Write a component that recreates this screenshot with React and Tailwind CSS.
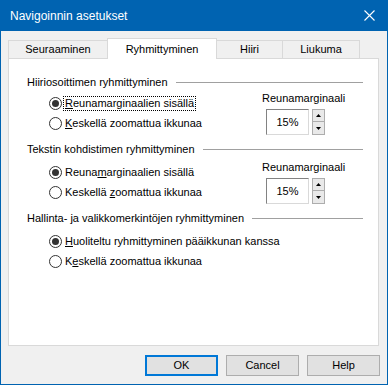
// App.jsx
// Windows-style "Navigoinnin asetukset" dialog, Ryhmittyminen tab selected

const FONT = { fontFamily: '"Liberation Sans", Arial, sans-serif' }

// ── Small pieces ──────────────

function Radio({ checked, focused, children }) {
  return (
    <div className="flex items-center h-[20px]">
      <span className="w-[13px] h-[13px] rounded-full border border-[#333] bg-white flex items-center justify-center">
        {checked && <span className="w-[7px] h-[7px] rounded-full bg-[#333]" />}
      </span>
      <span className={`ml-[2px] px-px leading-[13px] ${focused ? 'outline outline-1 outline-dotted outline-black' : ''}`}>
        {children}
      </span>
    </div>
  )
}

function Heading({ children }) {
  return (
    <div className="flex items-center h-[14px]">
      <span>{children}</span>
      <span className="flex-1 h-px bg-[#a0a0a0] ml-[8px]" />
    </div>
  )
}

function Spinner({ value }) {
  return (
    <div className="flex flex-col -mt-[2px]">
      <span className="h-[14px] leading-[14px]">Reunamarginaali</span>
      <div className="flex mt-[4px] ml-[4px]">
        <div className="w-[43px] h-[26px] bg-white border border-[#d9d9d9] border-t-[#828282] border-l-[#828282] flex items-center justify-center">
          {value}
        </div>
        <div className="ml-[3px] flex flex-col w-[13px]">
          <button className="h-[13px] border border-[#adadad] bg-[#e9e9e9] flex items-center justify-center">
            <svg width="5" height="3" viewBox="0 0 5 3"><path d="M2.5 0 L5 3 L0 3 Z" fill="#000" /></svg>
          </button>
          <button className="h-[13px] border border-t-0 border-[#adadad] bg-[#e9e9e9] flex items-center justify-center">
            <svg width="5" height="3" viewBox="0 0 5 3"><path d="M0 0 L5 0 L2.5 3 Z" fill="#000" /></svg>
          </button>
        </div>
      </div>
    </div>
  )
}

// ── Dialog ──────────────

export default function App() {
  const tabs = [
    { label: 'Seuraaminen', cls: 'w-[99px] mt-[2px] h-[18px] border-l border-t bg-[#f0f0f0]' },
    { label: 'Ryhmittyminen', cls: 'w-[110px] h-[21px] border-l border-t border-r bg-white relative z-10', active: true },
    { label: 'Hiiri', cls: 'w-[66px] mt-[2px] h-[18px] border-t border-r bg-[#f0f0f0]' },
    { label: 'Liukuma', cls: 'w-[77px] mt-[2px] h-[18px] border-t border-r bg-[#f0f0f0]' },
  ]

  return (
    <div style={FONT} className="w-[388px] h-[385px] bg-[#0063b1] flex flex-col text-[11px] text-black">
      {/* Title bar */}
      <div className="h-[31px] shrink-0 flex items-center pl-[10px] pr-[13px] text-white text-[12px]">
        <span className="flex-1">Navigoinnin asetukset</span>
        <svg width="11" height="11" viewBox="0 0 11 11">
          <path d="M0.5 0.5 L10.5 10.5 M10.5 0.5 L0.5 10.5" stroke="#fff" strokeWidth="1.1" />
        </svg>
      </div>

      {/* Body */}
      <div className="flex-1 mx-px mb-px bg-[#f0f0f0] flex flex-col">
        {/* Tabs */}
        <div className="flex items-start ml-[7px] mt-[7px] -mb-px">
          {tabs.map(t => (
            <div key={t.label} className={`${t.cls} border-[#d9d9d9] flex items-center justify-center`}>
              {t.label}
            </div>
          ))}
        </div>

        {/* Tab panel */}
        <div className="ml-[7px] w-[371px] h-[288px] bg-white border border-[#d9d9d9] pl-[18px] pr-[15px] pt-[16px]">
          <Heading>Hiiriosoittimen ryhmittyminen</Heading>
          <div className="grid grid-cols-[235px_auto] mt-[4px]">
            <div className="pl-[22px]">
              <Radio checked focused><u>R</u>eunamarginaalien sisällä</Radio>
              <Radio><u>K</u>eskellä zoomattua ikkunaa</Radio>
            </div>
            <Spinner value="15%" />
          </div>

          <div className="mt-[7px]">
            <Heading>Tekstin kohdistimen ryhmittyminen</Heading>
          </div>
          <div className="grid grid-cols-[235px_auto] mt-[6px]">
            <div className="pl-[22px]">
              <Radio checked>Reuna<u>m</u>arginaalien sisällä</Radio>
              <Radio>Keskellä <u>z</u>oomattua ikkunaa</Radio>
            </div>
            <Spinner value="15%" />
          </div>

          <div className="mt-[7px]">
            <Heading>Hallinta- ja valikkomerkintöjen ryhmittyminen</Heading>
          </div>
          <div className="pl-[22px] mt-[6px]">
            <Radio checked><u>H</u>uoliteltu ryhmittyminen pääikkunan kanssa</Radio>
            <Radio>K<u>e</u>skellä zoomattua ikkunaa</Radio>
          </div>
        </div>

        {/* Buttons */}
        <div className="flex justify-end gap-[8px] pr-[7px] mt-[9px]">
          <button className="w-[73px] h-[21px] bg-[#e1e1e1] border-2 border-[#0078d7]">OK</button>
          <button className="w-[73px] h-[21px] bg-[#e1e1e1] border border-[#adadad]">Cancel</button>
          <button className="w-[73px] h-[21px] bg-[#e1e1e1] border border-[#adadad]">Help</button>
        </div>
      </div>
    </div>
  )
}
